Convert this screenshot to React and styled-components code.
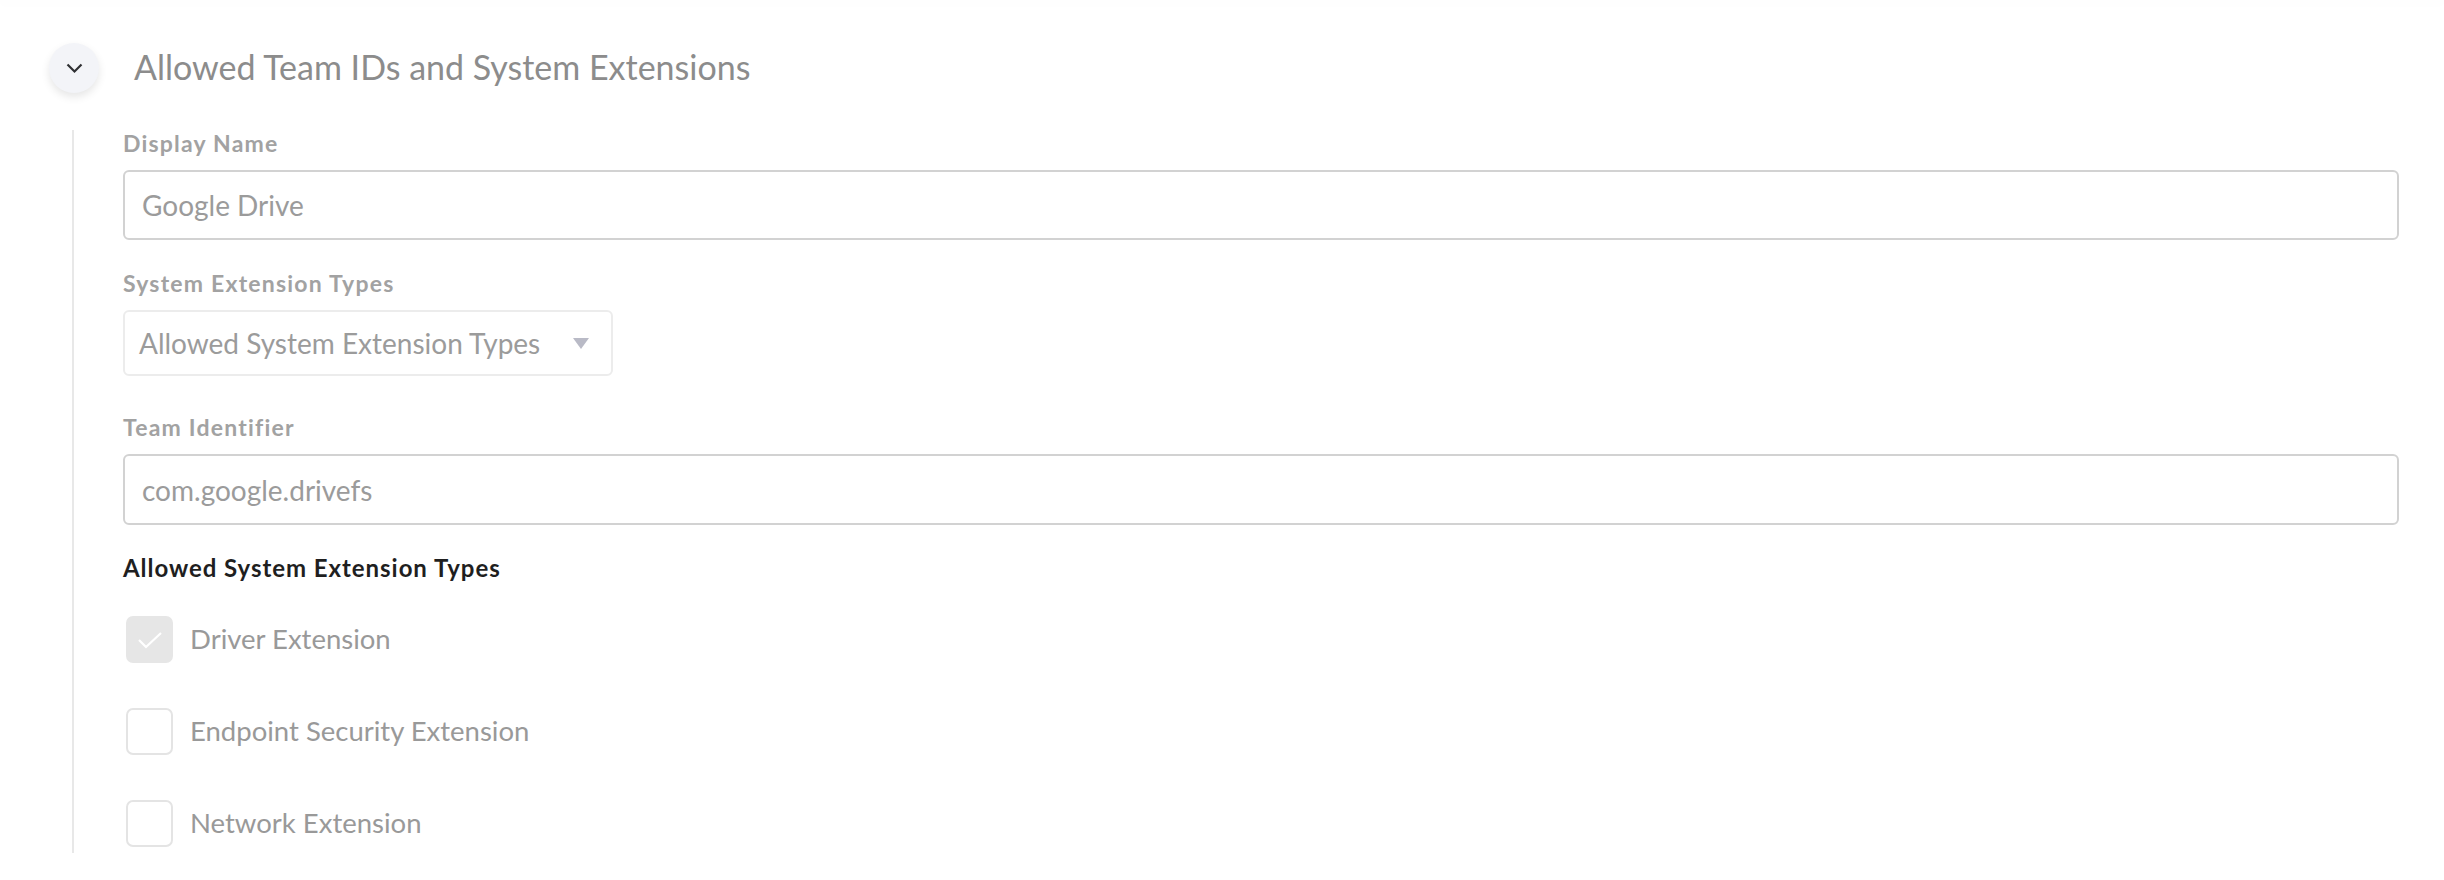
import React, { useState } from "react";
import styled, { createGlobalStyle } from "styled-components";

const GlobalStyle = createGlobalStyle`
  html, body {
    margin: 0;
    padding: 0;
    background: #fff;
    font-family: "Lato", "Liberation Sans", sans-serif;
  }
  * {
    box-sizing: border-box;
  }
`;

const Page = styled.div`
  width: 100%;
  min-height: 880px;
  background: #fff;
  overflow: hidden;
`;

const TopEdge = styled.div`
  height: 1px;
  margin-top: -1px;
  box-shadow: 0 2px 10px rgba(0, 0, 0, 0.09);
`;

const SectionHeader = styled.div`
  display: flex;
  align-items: center;
  gap: 35px;
  padding: 43px 0 0 49px;
`;

const ToggleButton = styled.button`
  width: 50px;
  height: 50px;
  border: none;
  border-radius: 50%;
  background: #f3f4f8;
  box-shadow: 0 4px 9px rgba(0, 0, 0, 0.1);
  display: flex;
  align-items: center;
  justify-content: center;
  padding: 0;
  cursor: pointer;
`;

const Title = styled.h2`
  margin: -2px 0 0;
  font-size: 34px;
  font-weight: 400;
  color: #8c8c8c;
  line-height: 40px;
`;

const Body = styled.div`
  margin: 37px 45px 0 72px;
  border-left: 2px solid #e8e8e8;
  padding: 1px 0 6px 49px;
  display: flex;
  flex-direction: column;
`;

const Field = styled.div`
  display: flex;
  flex-direction: column;
  gap: 15px;
  margin-top: ${(p) => p.gap || 0}px;
`;

const Label = styled.label`
  font-size: 23px;
  font-weight: 700;
  line-height: 24px;
  letter-spacing: 1.2px;
  color: #a2a2a2;
`;

const TextInput = styled.input`
  width: 100%;
  height: ${(p) => p.h || 70}px;
  border: 2px solid #d2d2d2;
  border-radius: 6px;
  padding: 0 17px;
  font-family: inherit;
  font-size: 28px;
  color: #9b9b9b;
  background: #fff;
  outline: none;
`;

const Select = styled.div`
  width: 490px;
  height: 66px;
  border: 2px solid #ececec;
  border-radius: 6px;
  display: flex;
  align-items: center;
  justify-content: space-between;
  padding: 0 22px 0 14px;
  font-size: 28px;
  color: #9b9b9b;
`;

const Caret = styled.span`
  width: 0;
  height: 0;
  border-left: 8px solid transparent;
  border-right: 8px solid transparent;
  border-top: 11px solid #b9bac6;
`;

const Heading = styled.h3`
  margin: 30px 0 0;
  font-size: 24px;
  font-weight: 700;
  line-height: 26px;
  letter-spacing: 0.95px;
  color: #1f1f1f;
`;

const CheckList = styled.div`
  display: flex;
  flex-direction: column;
  gap: 45px;
  margin-top: 35px;
  padding-left: 3px;
`;

const CheckRow = styled.label`
  display: flex;
  align-items: center;
  gap: 17px;
  cursor: pointer;
`;

const Box = styled.span`
  width: 47px;
  height: 47px;
  border-radius: 7px;
  border: 2px solid ${(p) => (p.checked ? "#e6e6e6" : "#e4e4e4")};
  background: ${(p) => (p.checked ? "#e6e6e6" : "#fff")};
  display: flex;
  align-items: center;
  justify-content: center;
`;

const CheckText = styled.span`
  margin-top: -2px;
  font-size: 27.5px;
  color: #999;
`;

const Chevron = () => (
  <svg width="17" height="11" viewBox="0 0 17 11" fill="none">
    <path d="M1.5 1.5 L8.5 8.5 L15.5 1.5" stroke="#2f3033" strokeWidth="2.2" />
  </svg>
);

const Tick = () => (
  <svg width="26" height="20" viewBox="0 0 26 20" fill="none">
    <path d="M2 10 L9 17 L24 3" stroke="#fff" strokeWidth="2.2" />
  </svg>
);

const types = [
  { id: "driver", label: "Driver Extension", checked: true },
  { id: "endpoint", label: "Endpoint Security Extension", checked: false },
  { id: "network", label: "Network Extension", checked: false },
];

const App = () => {
  const [checked, setChecked] = useState(
    types.reduce((acc, t) => ({ ...acc, [t.id]: t.checked }), {})
  );

  return (
    <Page>
      <GlobalStyle />
      <TopEdge />
      <SectionHeader>
        <ToggleButton aria-label="Collapse">
          <Chevron />
        </ToggleButton>
        <Title>Allowed Team IDs and System Extensions</Title>
      </SectionHeader>
      <Body>
        <Field>
          <Label>Display Name</Label>
          <TextInput defaultValue="Google Drive" />
        </Field>
        <Field gap={31}>
          <Label>System Extension Types</Label>
          <Select>
            Allowed System Extension Types
            <Caret />
          </Select>
        </Field>
        <Field gap={39}>
          <Label>Team Identifier</Label>
          <TextInput h={71} defaultValue="com.google.drivefs" />
        </Field>
        <Heading>Allowed System Extension Types</Heading>
        <CheckList>
          {types.map((t) => (
            <CheckRow
              key={t.id}
              onClick={() => setChecked({ ...checked, [t.id]: !checked[t.id] })}
            >
              <Box checked={checked[t.id]}>{checked[t.id] && <Tick />}</Box>
              <CheckText>{t.label}</CheckText>
            </CheckRow>
          ))}
        </CheckList>
      </Body>
    </Page>
  );
};

export default App;
